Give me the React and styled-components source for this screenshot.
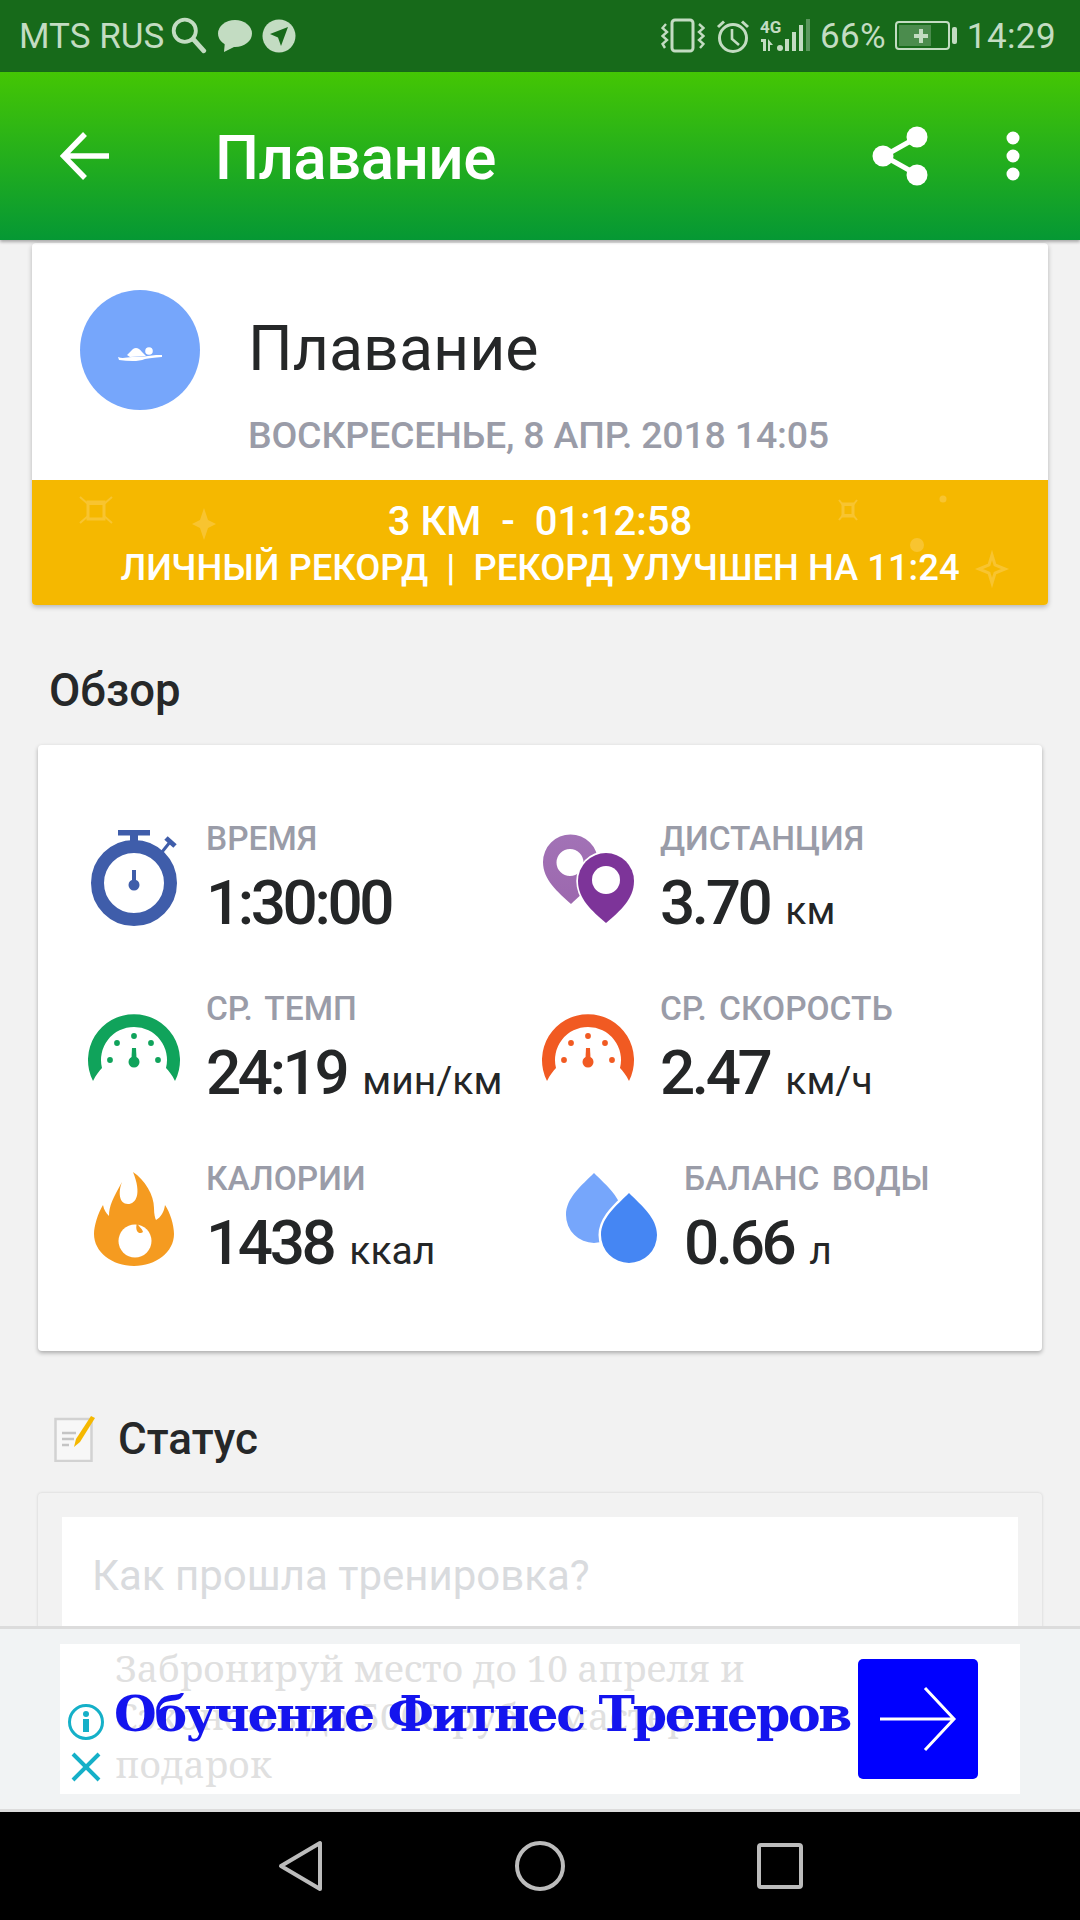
import React from 'react';
import styled, { createGlobalStyle } from 'styled-components';

const GlobalStyle = createGlobalStyle`
  html, body { margin: 0; padding: 0; background: #f2f2f2; }
  body { font-family: Roboto, "Noto Sans", sans-serif; }
`;

const Page = styled.div`
  width: 1080px;
  height: 1920px;
  display: flex;
  flex-direction: column;
  overflow: hidden;
  background: #f2f2f2;
`;

const StatusBar = styled.div`
  height: 72px;
  flex: none;
  display: flex;
  align-items: center;
  padding: 0 24px 0 19px;
  background: #176a1a;
  color: #c3dcc2;
  font-size: 35px;
`;

const StatusText = styled.span`
  margin-left: ${p => p.$ml || 0}px;
  letter-spacing: ${p => p.$ls || 0}px;
  line-height: 1;
`;

const StatusIcon = styled.svg`
  display: block;
  flex: none;
  margin-left: ${p => p.$ml || 0}px;
`;

const Spacer = styled.div`
  flex: 1;
`;

const AppBar = styled.div`
  height: 168px;
  flex: none;
  display: flex;
  align-items: center;
  padding: 0 60px 0 60px;
  background: linear-gradient(180deg, #44c604 0%, #059834 100%);
  box-shadow: 0 2px 3px rgba(0, 0, 0, 0.3);
  color: #fff;
  position: relative;
  z-index: 2;
`;

const AppTitle = styled.div`
  margin-left: 105px;
  padding-top: 3px;
  font-size: 62px;
  font-weight: 500;
  letter-spacing: -0.6px;
`;

const AppBarActions = styled.div`
  display: flex;
  align-items: center;
  gap: 78px;
`;

const Content = styled.div`
  flex: 1;
  min-height: 0;
  overflow: hidden;
  padding-top: 3px;
`;

const HeadCard = styled.div`
  margin: 0 32px;
  background: #fff;
  border-radius: 4px;
  box-shadow: 0 2px 5px rgba(0, 0, 0, 0.25);
  overflow: hidden;
`;

const HeadTop = styled.div`
  height: 237px;
  display: flex;
  padding: 47px 0 0 48px;
  box-sizing: border-box;
`;

const Avatar = styled.div`
  width: 120px;
  height: 120px;
  border-radius: 50%;
  background: #76a6fb;
  display: flex;
  align-items: center;
  justify-content: center;
  flex: none;
`;

const HeadText = styled.div`
  margin-left: 48px;
  display: flex;
  flex-direction: column;
`;

const HeadTitle = styled.div`
  font-size: 62.7px;
  line-height: 74px;
  margin-top: 22px;
  color: #252728;
`;

const HeadDate = styled.div`
  font-size: 37.5px;
  line-height: 44px;
  margin-top: 27px;
  font-weight: 500;
  color: #9a9ca8;
  letter-spacing: -0.2px;
  white-space: nowrap;
`;

const Record = styled.div`
  position: relative;
  height: 125px;
  background: #f5b800;
  color: #fff;
  font-weight: 500;
  text-align: center;
  box-sizing: border-box;
  padding-top: 19px;
`;

const Sparkles = styled.svg`
  position: absolute;
  left: 0;
  top: 0;
`;

const RecordMain = styled.div`
  position: relative;
  font-size: 40px;
  line-height: 46px;
  white-space: pre;
`;

const RecordSub = styled.div`
  position: relative;
  font-size: 36.4px;
  line-height: 46px;
  white-space: pre;
`;

const SectionTitle = styled.div`
  display: flex;
  align-items: center;
  margin: ${p => p.$mt}px 0 ${p => p.$mb}px ${p => p.$ml}px;
  font-size: ${p => p.$size}px;
  line-height: 46px;
  font-weight: 500;
  color: #262829;
`;

const OverviewCard = styled.div`
  margin: 0 38px;
  height: 606px;
  box-sizing: border-box;
  padding: 55px 0 0 22px;
  background: #fff;
  border-radius: 4px;
  box-shadow: 0 2px 4px rgba(0, 0, 0, 0.3);
  display: grid;
  grid-template-columns: 460px 1fr;
  grid-auto-rows: 170px;
`;

const Metric = styled.div`
  display: flex;
`;

const MetricIcon = styled.svg`
  display: block;
  flex: none;
  width: ${p => p.$size || 120}px;
  height: ${p => p.$size || 120}px;
  overflow: visible;
`;

const MetricBody = styled.div`
  margin-left: ${p => p.$gap}px;
  padding-top: 20px;
`;

const MetricLabel = styled.div`
  font-size: 33.5px;
  line-height: 38px;
  font-weight: 500;
  color: #9a9ca8;
  white-space: nowrap;
  word-spacing: 4px;
`;

const MetricValue = styled.div`
  margin-top: 10px;
  font-size: 62px;
  line-height: 70px;
  font-weight: 500;
  color: #242627;
  white-space: pre;
  letter-spacing: -3.4px;
`;

const MetricUnit = styled.span`
  font-size: 39px;
  font-weight: 400;
  letter-spacing: 0;
  margin-left: 16px;
`;

const StatusCard = styled.div`
  margin: 0 38px;
  padding: 24px 24px 0;
  height: 300px;
  box-sizing: border-box;
  background: #f2f2f2;
  border-radius: 4px;
  box-shadow: 0 0 3px rgba(0, 0, 0, 0.15);
`;

const StatusInput = styled.div`
  height: 200px;
  background: #fff;
  padding: 36px 0 0 30px;
  box-sizing: border-box;
  font-size: 42px;
  line-height: 46px;
  color: #d9dbde;
`;

const AdBar = styled.div`
  height: 186px;
  flex: none;
  box-sizing: border-box;
  padding: 15px 60px 15px;
  background: #f1f3f4;
  border-top: 3px solid #dcdcdc;
  border-bottom: 3px solid #dcdcdc;
  position: relative;
  z-index: 2;
`;

const AdInner = styled.div`
  position: relative;
  height: 150px;
  background: #fff;
  display: flex;
`;

const AdSide = styled.div`
  width: 55px;
  padding-right: 4px;
  flex: none;
  display: flex;
  flex-direction: column;
  align-items: center;
  padding-top: 59px;
  box-sizing: border-box;
  gap: 11px;
`;

const AdGhost = styled.div`
  flex: 1;
  font-family: "Noto Serif", "DejaVu Serif", serif;
  font-size: 37px;
  line-height: 48px;
  color: #e0e0e0;
  white-space: nowrap;
`;

const AdHeadline = styled.div`
  position: absolute;
  left: 54px;
  top: 40px;
  font-family: "DejaVu Serif", serif;
  font-weight: 700;
  font-size: 49px;
  line-height: 60px;
  letter-spacing: -2.3px;
  color: #1414ee;
  white-space: nowrap;
`;

const AdButton = styled.div`
  width: 120px;
  height: 120px;
  margin: 15px 42px 0 0;
  flex: none;
  background: #0000ff;
  border-radius: 5px;
  display: flex;
  align-items: center;
  justify-content: center;
`;

const NavBar = styled.div`
  height: 108px;
  flex: none;
  background: #000;
  display: flex;
  align-items: center;
  justify-content: center;
`;

const NavButton = styled.svg`
  display: block;
  width: 60px;
  height: 60px;
  margin: 0 ${p => p.$mx}px;
`;

const StatusLeftIcons = () => (
  <>
    <StatusIcon $ml={7} width="36" height="38" viewBox="0 0 34 36" fill="none">
      <circle cx="13" cy="13" r="10.5" stroke="#c3dcc2" strokeWidth="3.6" />
      <path d="M21 21 L31 32" stroke="#c3dcc2" strokeWidth="4.5" strokeLinecap="round" />
    </StatusIcon>
    <StatusIcon $ml={11} width="34" height="34" viewBox="0 0 34 34">
      <ellipse cx="17" cy="14.5" rx="17" ry="13.5" fill="#c3dcc2" />
      <path d="M7 22 L6 33 L20 26 Z" fill="#c3dcc2" />
    </StatusIcon>
    <StatusIcon $ml={10} width="34" height="34" viewBox="0 0 34 34">
      <circle cx="17" cy="17" r="16.5" fill="#c3dcc2" />
      <path d="M26 8 L8 15 L16 18.5 L19 27 Z" fill="#176a1a" />
    </StatusIcon>
  </>
);

const StatusRightIcons = () => (
  <>
    <StatusIcon width="44" height="36" viewBox="0 0 44 36" fill="none" stroke="#c3dcc2">
      <rect x="11" y="2" width="21" height="31" rx="3" strokeWidth="3" />
      <path d="M5 6 L1.5 10 L6 14 L1.5 18 L6 22 L1.5 26 L4 30" strokeWidth="2.4" />
      <path d="M38 6 L42.5 10 L38 14 L42.5 18 L38 22 L42.5 26 L39 30" strokeWidth="2.4" />
    </StatusIcon>
    <StatusIcon $ml={11} width="34" height="36" viewBox="0 0 34 36" fill="none" stroke="#c3dcc2">
      <circle cx="17" cy="20" r="13.5" strokeWidth="3" />
      <path d="M16 11 V21 L23 27" strokeWidth="2.6" />
      <path d="M2 9 L8 3.5 M32 9 L26 3.5" strokeWidth="3" />
    </StatusIcon>
    <StatusIcon $ml={10} width="50" height="36" viewBox="0 0 50 36">
      <text x="0" y="15" fontFamily="Roboto" fontWeight="700" fontSize="17" fill="#c3dcc2">4G</text>
      <path d="M1 21 H6 V33 H3 V24 H1 Z M8 21 L13 27 L10 27 V33 H8 Z" fill="#c3dcc2" />
      <circle cx="20" cy="30" r="3" fill="#c3dcc2" />
      <rect x="25" y="21" width="4" height="12" fill="#c3dcc2" />
      <rect x="32" y="14" width="4" height="19" fill="#c3dcc2" />
      <rect x="39" y="7" width="4" height="26" fill="#c3dcc2" />
      <rect x="46" y="1" width="4" height="32" fill="#c3dcc2" opacity="0.4" />
    </StatusIcon>
    <StatusText $ml={10} $ls={0.3}>66%</StatusText>
    <StatusIcon $ml={9} width="62" height="32" viewBox="0 0 62 32">
      <rect x="1" y="2" width="53" height="27" rx="3" fill="none" stroke="#c3dcc2" strokeWidth="2" />
      <rect x="4" y="5" width="32" height="21" fill="#c3dcc2" opacity="0.3" />
      <path d="M19 11 H24 V6 H28 V11 H33 V15 H28 V20 H24 V15 H19 Z" transform="translate(0 3)" fill="#c3dcc2" />
      <rect x="57" y="7" width="5" height="17" rx="2" fill="#c3dcc2" />
    </StatusIcon>
    <StatusText $ml={10} $ls={0.4}>14:29</StatusText>
  </>
);

const BackArrow = () => (
  <svg width="50" height="50" viewBox="0 0 50 50" fill="none" stroke="#fff" strokeWidth="5.5" style={{ display: 'block' }}>
    <path d="M49 25 H4 M25 3 L3.5 25 L25 47" />
  </svg>
);

const ShareIcon = () => (
  <svg width="56" height="60" viewBox="0 0 56 60" style={{ display: 'block' }}>
    <path d="M44 12 L12 30 L44 48" fill="none" stroke="#fff" strokeWidth="5" />
    <circle cx="45" cy="11" r="10.5" fill="#fff" />
    <circle cx="11" cy="30" r="10.5" fill="#fff" />
    <circle cx="45" cy="49" r="10.5" fill="#fff" />
  </svg>
);

const MenuIcon = () => (
  <svg width="14" height="50" viewBox="0 0 14 50" style={{ display: 'block' }}>
    <circle cx="7" cy="7" r="6.5" fill="#fff" />
    <circle cx="7" cy="25" r="6.5" fill="#fff" />
    <circle cx="7" cy="43" r="6.5" fill="#fff" />
  </svg>
);

const Swimmer = () => (
  <svg width="44" height="16" viewBox="0 0 44 16" fill="#fff" style={{ display: 'block', marginTop: 10 }}>
    <circle cx="31" cy="4" r="3.8" />
    <path d="M9 8 L15 2 C18 0 21 1 24 5 L28 9 L12 10 Z" />
    <path d="M0 10 C5 12 9 10 14 10 C22 10 30 9 38 8 L44 8 L44 10 C36 11 31 11 27 12 C20 15 10 14 1 13 Z" />
  </svg>
);

const Stopwatch = () => (
  <MetricIcon viewBox="0 0 120 120">
    <rect x="58" y="30" width="32" height="5.5" fill="#3f5daa" />
    <rect x="70" y="34" width="8" height="10" fill="#3f5daa" />
    <path d="M106 38 L115 46" stroke="#3f5daa" strokeWidth="5" />
    <path d="M110 42 L102 52" stroke="#3f5daa" strokeWidth="3" />
    <circle cx="74" cy="83" r="36.5" fill="none" stroke="#3f5daa" strokeWidth="13" />
    <rect x="72" y="70" width="4" height="14" fill="#3f5daa" />
    <circle cx="74" cy="85" r="5.5" fill="#3f5daa" />
  </MetricIcon>
);

const Gauge = ({ color, dx }) => (
  <MetricIcon viewBox={`${dx} 0 120 120`}>
    <path d="M33 111 A46 46 0 1 1 115 111 C112 105 109 101 106 98 A33 33 0 1 0 42 98 C39 101 36 105 33 111 Z" fill={color} />
    <circle cx="50" cy="90" r="2.9" fill={color} />
    <circle cx="57" cy="73" r="2.9" fill={color} />
    <circle cx="74" cy="66" r="2.9" fill={color} />
    <circle cx="91" cy="73" r="2.9" fill={color} />
    <circle cx="98" cy="90" r="2.9" fill={color} />
    <path d="M72 78 H76 L76.5 88 H71.5 Z" fill={color} />
    <circle cx="74" cy="92" r="5.5" fill={color} />
  </MetricIcon>
);

const Pins = () => (
  <MetricIcon viewBox="0 0 120 120">
    <defs>
      <linearGradient id="pinLight" x1="0" x2="0" y1="0" y2="1">
        <stop offset="0" stopColor="#a272b6" />
        <stop offset="1" stopColor="#9c68ae" />
      </linearGradient>
    </defs>
    <path fillRule="evenodd" d="M51 104 C38 92 23 80 23 62 A27.5 27.5 0 0 1 78 62 C78 80 64 92 51 104 Z M50 49 A13.5 13.5 0 1 0 50 76 A13.5 13.5 0 1 0 50 49 Z" fill="url(#pinLight)" />
    <path d="M86 123 C72 111 58 99 58 81 A28 28 0 0 1 114 81 C114 99 100 111 86 123 Z" fill="#7d3499" stroke="#fff" strokeWidth="3.5" paintOrder="stroke" />
    <circle cx="86" cy="80" r="14" fill="#fff" />
  </MetricIcon>
);

const Flame = () => (
  <MetricIcon viewBox="0 0 120 120">
    <path d="M73 32 C85 40 94 55 94 68 C94 74 95 78 96 80 C101 77 104 72 105 65 C110 72 114 85 114 94 C114 112 96 126 74 126 C52 126 34 112 34 94 C34 86 38 73 43 65 C44 70 46 73 49 76 C49 66 53 58 62 42 C58 52 59 64 68 64 C76 64 82 54 73 32 Z" fill="#f59b20" />
    <circle cx="75" cy="101" r="16.5" fill="#fff" />
    <path d="M77 83 C78 86 82 88 83 92 C81 94 78 93 77 91 C76 89 76 86 77 83 Z" fill="#f59b20" />
  </MetricIcon>
);

const Drops = () => (
  <MetricIcon $size={144} viewBox="0 0 144 144">
    <path d="M74 33 C87 46 102 58 102 75 A28 28 0 0 1 46 75 C46 58 61 46 74 33 Z" fill="#76a6fb" />
    <path d="M109 53 C122 66 137 78 137 95 A28 28 0 0 1 81 95 C81 78 96 66 109 53 Z" fill="#4586f3" stroke="#fff" strokeWidth="5" paintOrder="stroke" />
  </MetricIcon>
);

const NoteIcon = () => (
  <svg width="42" height="46" viewBox="0 0 42 46" style={{ display: 'block', marginRight: 22 }}>
    <rect x="1.5" y="3" width="36" height="42" fill="#f7f7f7" stroke="#d2d2d2" strokeWidth="2.5" />
    <path d="M8 17 H22 M8 23 H20 M8 29 H15" stroke="#c4c4c4" strokeWidth="2.5" />
    <path d="M37 0 L41 2 L26 26 L20 31 L22 23 Z" fill="#f5b800" />
  </svg>
);

const metrics = [
  { label: 'ВРЕМЯ', value: '1:30:00', icon: <Stopwatch />, gap: 26 },
  { label: 'ДИСТАНЦИЯ', value: '3.70', unit: 'км', icon: <Pins />, gap: 20 },
  { label: 'СР. ТЕМП', value: '24:19', unit: 'мин/км', icon: <Gauge color="#10a35b" dx={0} />, gap: 26 },
  { label: 'СР. СКОРОСТЬ', value: '2.47', unit: 'км/ч', icon: <Gauge color="#f15a22" dx={6} />, gap: 20 },
  { label: 'КАЛОРИИ', value: '1438', unit: 'ккал', icon: <Flame />, gap: 26 },
  { label: 'БАЛАНС ВОДЫ', value: '0.66', unit: 'л', icon: <Drops />, gap: 20 },
];

export default function App() {
  return (
    <Page>
      <GlobalStyle />
      <StatusBar>
        <StatusText>MTS RUS</StatusText>
        <StatusLeftIcons />
        <Spacer />
        <StatusRightIcons />
      </StatusBar>

      <AppBar>
        <BackArrow />
        <AppTitle>Плавание</AppTitle>
        <Spacer />
        <AppBarActions>
          <ShareIcon />
          <MenuIcon />
        </AppBarActions>
      </AppBar>

      <Content>
        <HeadCard>
          <HeadTop>
            <Avatar><Swimmer /></Avatar>
            <HeadText>
              <HeadTitle>Плавание</HeadTitle>
              <HeadDate>ВОСКРЕСЕНЬЕ, 8 АПР. 2018 14:05</HeadDate>
            </HeadText>
          </HeadTop>
          <Record>
            <Sparkles width="1016" height="125" viewBox="0 0 1016 125" fill="#f8c430">
              <path d="M48 17 L56 24 H72 L80 17 M48 43 L56 36 M80 43 L72 36" fill="none" stroke="#f8c430" strokeWidth="2" />
              <rect x="56" y="22" width="16" height="17" fill="none" stroke="#f8c430" strokeWidth="3" />
              <path d="M172 28 L176 40 L184 44 L176 48 L172 60 L168 48 L160 44 L168 40 Z" />
              <path d="M807 20 L811 25 H821 L825 20 M807 40 L811 35 H821 L825 40" fill="none" stroke="#f8c430" strokeWidth="2" />
              <rect x="811" y="24" width="10" height="12" fill="none" stroke="#f8c430" strokeWidth="3" />
              <circle cx="911" cy="19" r="3.5" />
              <circle cx="885" cy="65" r="7" />
              <path d="M960 75 L963 85 L973 89 L963 93 L960 103 L957 93 L947 89 L957 85 Z" fill="none" stroke="#f8c430" strokeWidth="3" />
            </Sparkles>
            <RecordMain>3 КМ  -  01:12:58</RecordMain>
            <RecordSub>ЛИЧНЫЙ РЕКОРД  |  РЕКОРД УЛУЧШЕН НА 11:24</RecordSub>
          </Record>
        </HeadCard>

        <SectionTitle $size={45.5} $mt={63} $mb={31} $ml={49}>Обзор</SectionTitle>

        <OverviewCard>
          {metrics.map(m => (
            <Metric key={m.label}>
              {m.icon}
              <MetricBody $gap={m.gap}>
                <MetricLabel>{m.label}</MetricLabel>
                <MetricValue>
                  {m.value}
                  {m.unit && <MetricUnit>{m.unit}</MetricUnit>}
                </MetricValue>
              </MetricBody>
            </Metric>
          ))}
        </OverviewCard>

        <SectionTitle $size={44} $mt={65} $mb={31} $ml={54}><NoteIcon />Статус</SectionTitle>

        <StatusCard>
          <StatusInput>Как прошла тренировка?</StatusInput>
        </StatusCard>
      </Content>

      <AdBar>
        <AdInner>
          <AdSide>
            <svg width="38" height="38" viewBox="0 0 38 38" style={{ display: 'block' }}>
              <circle cx="19" cy="19" r="16.5" fill="none" stroke="#15b0c8" strokeWidth="3" />
              <circle cx="19" cy="11" r="3" fill="#15b0c8" />
              <rect x="16" y="16" width="6" height="13" fill="#15b0c8" />
            </svg>
            <svg width="30" height="30" viewBox="0 0 30 30" style={{ display: 'block' }}>
              <path d="M2 2 L28 28 M28 2 L2 28" stroke="#15b0c8" strokeWidth="4" />
            </svg>
          </AdSide>
          <AdGhost>
            Забронируй место до 10 апреля и<br />
            Сэкономь до 5000 руб + мастер<br />
            подарок
          </AdGhost>
          <AdHeadline>Обучение Фитнес Тренеров</AdHeadline>
          <AdButton>
            <svg width="78" height="66" viewBox="0 0 78 66" fill="none" stroke="#fff" strokeWidth="3" style={{ display: 'block' }}>
              <path d="M1 33 H74 M46 2 L75 33 L46 64" />
            </svg>
          </AdButton>
        </AdInner>
      </AdBar>

      <NavBar>
        <NavButton $mx={0} viewBox="0 0 60 60" fill="none" stroke="#bcbcbc" strokeWidth="4">
          <path d="M50 7 V53 L11 30 Z" strokeLinejoin="round" />
        </NavButton>
        <NavButton $mx={180} viewBox="0 0 60 60" fill="none" stroke="#bcbcbc" strokeWidth="4">
          <circle cx="30" cy="30" r="23" />
        </NavButton>
        <NavButton $mx={0} viewBox="0 0 60 60" fill="none" stroke="#bcbcbc" strokeWidth="4">
          <rect x="9" y="9" width="42" height="42" rx="2" />
        </NavButton>
      </NavBar>
    </Page>
  );
}
